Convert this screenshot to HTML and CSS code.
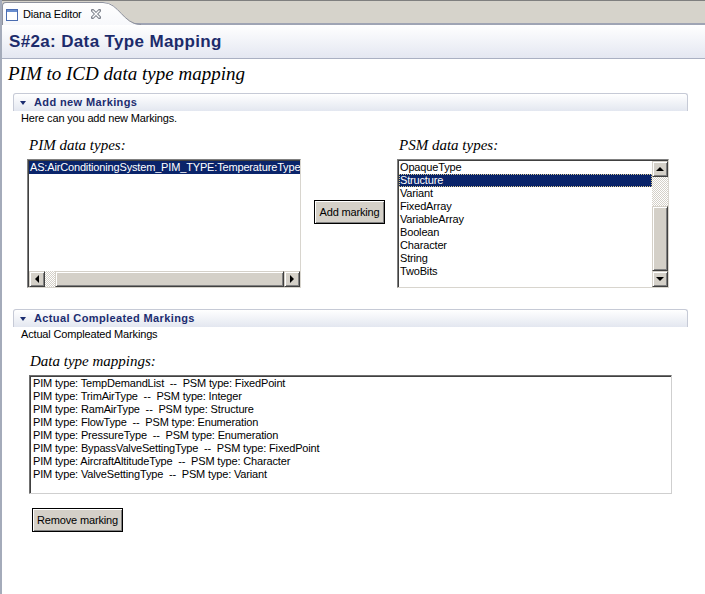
FILE: index.html
```html
<!DOCTYPE html>
<html>
<head>
<meta charset="utf-8">
<title>Diana Editor</title>
<link rel="stylesheet" href="styles.css">
</head>
<body>
<div class="window">
  <div class="tabbar">
    <div class="tab">
      <svg class="tab-icon" width="12" height="12" viewBox="0 0 12 12">
        <rect x="0.5" y="0.5" width="11" height="11" fill="#ffffff" stroke="#4a6cb0"/>
        <rect x="1" y="1" width="10" height="2" fill="#6a8fd0"/>
      </svg>
      <span class="tab-label">Diana Editor</span>
      <svg class="tab-close" width="10" height="10" viewBox="0 0 10 10">
        <path d="M1.5 1.5 L8.5 8.5 M8.5 1.5 L1.5 8.5" stroke="#7d828c" stroke-width="3.2" stroke-linecap="square"/>
        <path d="M1.5 1.5 L8.5 8.5 M8.5 1.5 L1.5 8.5" stroke="#ffffff" stroke-width="1.3"/>
      </svg>
    </div>
    <svg class="tab-curve" width="38" height="23" viewBox="0 0 38 23">
      <defs>
        <linearGradient id="tg" x1="0" y1="0" x2="0" y2="1">
          <stop offset="0" stop-color="#ffffff"/>
          <stop offset="1" stop-color="#f7f8fb"/>
        </linearGradient>
      </defs>
      <path d="M0 0 C16 0 20 23 38 23 L0 23 Z" fill="url(#tg)"/>
      <path d="M0 0.5 C16 0.5 20 22.5 38 22.5" fill="none" stroke="#8e929e"/>
    </svg>
  </div>
  <div class="editor-title">S#2a: Data Type Mapping</div>
  <div class="form">
    <div class="form-title">PIM to ICD data type mapping</div>

    <section class="section">
      <div class="section-head"><span class="twistie"></span>Add new Markings</div>
      <div class="section-desc">Here can you add new Markings.</div>
      <div class="marking-row">
        <div class="field">
          <div class="field-label">PIM data types:</div>
          <div class="listbox listbox-pim">
            <div class="list-items">
              <div class="item selected">AS:AirConditioningSystem_PIM_TYPE:TemperatureType</div>
            </div>
            <div class="hscroll">
              <div class="sb-btn"><span class="arrow arrow-left"></span></div>
              <div class="sb-track sb-track-h"></div>
              <div class="sb-thumb"></div>
              <div class="sb-btn"><span class="arrow arrow-right"></span></div>
            </div>
          </div>
        </div>
        <div class="action">
          <button class="btn btn-add">Add marking</button>
        </div>
        <div class="field field-psm">
          <div class="field-label">PSM data types:</div>
          <div class="listbox listbox-psm">
            <div class="list-items">
              <div class="item">OpaqueType</div>
              <div class="item selected focused">Structure</div>
              <div class="item">Variant</div>
              <div class="item">FixedArray</div>
              <div class="item">VariableArray</div>
              <div class="item">Boolean</div>
              <div class="item">Character</div>
              <div class="item">String</div>
              <div class="item">TwoBits</div>
            </div>
            <div class="vscroll">
              <div class="sb-btn"><span class="arrow arrow-up"></span></div>
              <div class="sb-track sb-track-v"></div>
              <div class="sb-thumb"></div>
              <div class="sb-btn"><span class="arrow arrow-down"></span></div>
            </div>
          </div>
        </div>
      </div>
    </section>

    <section class="section section-completed">
      <div class="section-head"><span class="twistie"></span>Actual Compleated Markings</div>
      <div class="section-desc">Actual Compleated Markings</div>
      <div class="field-label mappings-label">Data type mappings:</div>
      <div class="listbox listbox-mappings">
        <div class="list-items">
          <div class="item">PIM type: TempDemandList&nbsp; --&nbsp; PSM type: FixedPoint</div>
          <div class="item">PIM type: TrimAirType&nbsp; --&nbsp; PSM type: Integer</div>
          <div class="item">PIM type: RamAirType&nbsp; --&nbsp; PSM type: Structure</div>
          <div class="item">PIM type: FlowType&nbsp; --&nbsp; PSM type: Enumeration</div>
          <div class="item">PIM type: PressureType&nbsp; --&nbsp; PSM type: Enumeration</div>
          <div class="item">PIM type: BypassValveSettingType&nbsp; --&nbsp; PSM type: FixedPoint</div>
          <div class="item">PIM type: AircraftAltitudeType&nbsp; --&nbsp; PSM type: Character</div>
          <div class="item">PIM type: ValveSettingType&nbsp; --&nbsp; PSM type: Variant</div>
        </div>
      </div>
      <button class="btn btn-remove">Remove marking</button>
    </section>
  </div>
</div>
</body>
</html>
```

FILE: styles.css
```css
html, body {
  margin: 0;
  padding: 0;
  background: #ffffff;
}

body {
  font-family: "Liberation Sans", Arial, sans-serif;
  font-size: 11px;
  letter-spacing: -0.16px;
  color: #000000;
}

.window {
  box-sizing: border-box;
  min-height: 594px;
  border-left: 2px solid #a4abba;
}

/* ---------- tab bar ---------- */
.tabbar {
  box-sizing: border-box;
  height: 25px;
  border-top: 1px solid #7f7f7f;
  display: flex;
  align-items: flex-end;
  background: linear-gradient(to top, #9fa4b4 0, #9fa4b4 2px, #d6d3cb 2px);
}

.tab {
  box-sizing: border-box;
  height: 23px;
  display: flex;
  align-items: center;
  padding-left: 3px;
  border-top: 1px solid #8e929e;
  border-left: 1px solid #8e929e;
  border-top-left-radius: 4px;
  background: linear-gradient(#ffffff, #f7f8fb);
}

.tab-icon {
  display: block;
  margin-top: 1px;
}

.tab-label {
  margin-left: 5px;
  font-size: 11px;
  color: #000000;
}

.tab-close {
  display: block;
  margin-left: 9px;
  margin-right: 2px;
}

.tab-curve {
  display: block;
}

/* ---------- editor title ---------- */
.editor-title {
  height: 33px;
  display: flex;
  align-items: center;
  padding-left: 7px;
  font-size: 17px;
  font-weight: bold;
  letter-spacing: 0.35px;
  color: #1c2b6b;
  background: linear-gradient(#ffffff, #e4e7f1);
  border-bottom: 1px solid #aab0c2;
}

/* ---------- form ---------- */
.form-title {
  margin: 4px 0 0 6px;
  font-family: "Liberation Serif", "Times New Roman", serif;
  font-style: italic;
  font-size: 19px;
  letter-spacing: 0;
  line-height: 22px;
}

.section {
  margin: 8px 0 0 11px;
  width: 675px;
}

.section-completed {
  margin-top: 21px;
}

.section-head {
  box-sizing: border-box;
  height: 18px;
  line-height: 17px;
  padding-left: 6px;
  display: flex;
  align-items: center;
  border: 1px solid #c6cad6;
  border-bottom: none;
  border-radius: 3px 3px 0 0;
  background: linear-gradient(#ffffff, #e3e7f0);
  font-weight: bold;
  letter-spacing: 0.38px;
  color: #1c2d70;
}

.twistie {
  width: 0;
  height: 0;
  border-style: solid;
  border-width: 4px 3px 0 3px;
  border-color: #1c2d70 transparent transparent transparent;
  margin-right: 8px;
  margin-top: 1px;
}

.section-desc {
  margin: 1px 0 0 8px;
  line-height: 13px;
}

.marking-row {
  display: flex;
  align-items: flex-start;
  margin: 11px 0 0 14px;
}

.field-label {
  font-family: "Liberation Serif", "Times New Roman", serif;
  font-style: italic;
  font-size: 15px;
  letter-spacing: 0;
  line-height: 18px;
  margin-left: 2px;
  margin-bottom: 5px;
}

.action {
  margin: 64px 12px 0 13px;
}

/* ---------- listboxes ---------- */
.listbox {
  box-sizing: border-box;
  display: flex;
  background: #ffffff;
  border: 1px solid;
  border-color: #808080 #d8d5ce #d8d5ce #808080;
  box-shadow: inset 1px 1px 0 #404040;
  padding: 1px 0 0 1px;
}

.listbox-pim {
  width: 274px;
  height: 129px;
  flex-direction: column;
}

.listbox-psm {
  width: 272px;
  height: 129px;
  margin-top: 1px;
}

.list-items {
  flex: 1;
  overflow: hidden;
  min-width: 0;
}

.item {
  height: 13px;
  line-height: 13px;
  padding-left: 1px;
  white-space: nowrap;
}

.item.selected {
  background: #0a246a;
  color: #ffffff;
}

.item.focused {
  box-sizing: border-box;
  outline: 1px dotted #d8c890;
  outline-offset: -1px;
}

.mappings-label {
  margin: 11px 0 5px 17px;
}

.listbox-mappings {
  width: 643px;
  height: 119px;
  margin-left: 16px;
  border-color: #707070 #cfcfcf #cfcfcf #707070;
}

.listbox-mappings .item {
  padding-left: 2px;
}

/* ---------- scrollbars ---------- */
.hscroll {
  display: flex;
  height: 16px;
  flex: none;
}

.vscroll {
  display: flex;
  flex-direction: column;
  width: 16px;
  flex: none;
}

.sb-btn,
.sb-thumb {
  box-sizing: border-box;
  background: #d4d0c8;
  border: 1px solid;
  border-color: #d4d0c8 #404040 #404040 #d4d0c8;
  box-shadow: inset 1px 1px 0 #ffffff, inset -1px -1px 0 #808080;
}

.sb-btn {
  width: 16px;
  height: 16px;
  flex: none;
  display: flex;
  align-items: center;
  justify-content: center;
}

.sb-thumb {
  flex: 1;
}

.sb-track {
  background: repeating-conic-gradient(#d4d0c8 0 25%, #ffffff 0 50%) 0 0 / 2px 2px;
}

.sb-track-h {
  flex: 0 0 10px;
}

.sb-track-v {
  flex: 0 0 29px;
}

.arrow {
  width: 0;
  height: 0;
  border-style: solid;
}

.arrow-left {
  border-width: 4px 4px 4px 0;
  border-color: transparent #000000 transparent transparent;
}

.arrow-right {
  border-width: 4px 0 4px 4px;
  border-color: transparent transparent transparent #000000;
}

.arrow-up {
  border-width: 0 4px 4px 4px;
  border-color: transparent transparent #000000 transparent;
}

.arrow-down {
  border-width: 4px 4px 0 4px;
  border-color: #000000 transparent transparent transparent;
}

/* ---------- buttons ---------- */
.btn {
  box-sizing: border-box;
  display: block;
  padding: 0;
  font-family: "Liberation Sans", Arial, sans-serif;
  font-size: 11px;
  letter-spacing: -0.16px;
  color: #000000;
  background: #d4d0c8;
  border: 1px solid #000000;
  box-shadow: inset 1px 1px 0 #ffffff, inset -1px -1px 0 #808080;
}

.btn-add {
  width: 71px;
  height: 24px;
}

.btn-remove {
  width: 91px;
  height: 24px;
  margin: 14px 0 0 19px;
}
```
